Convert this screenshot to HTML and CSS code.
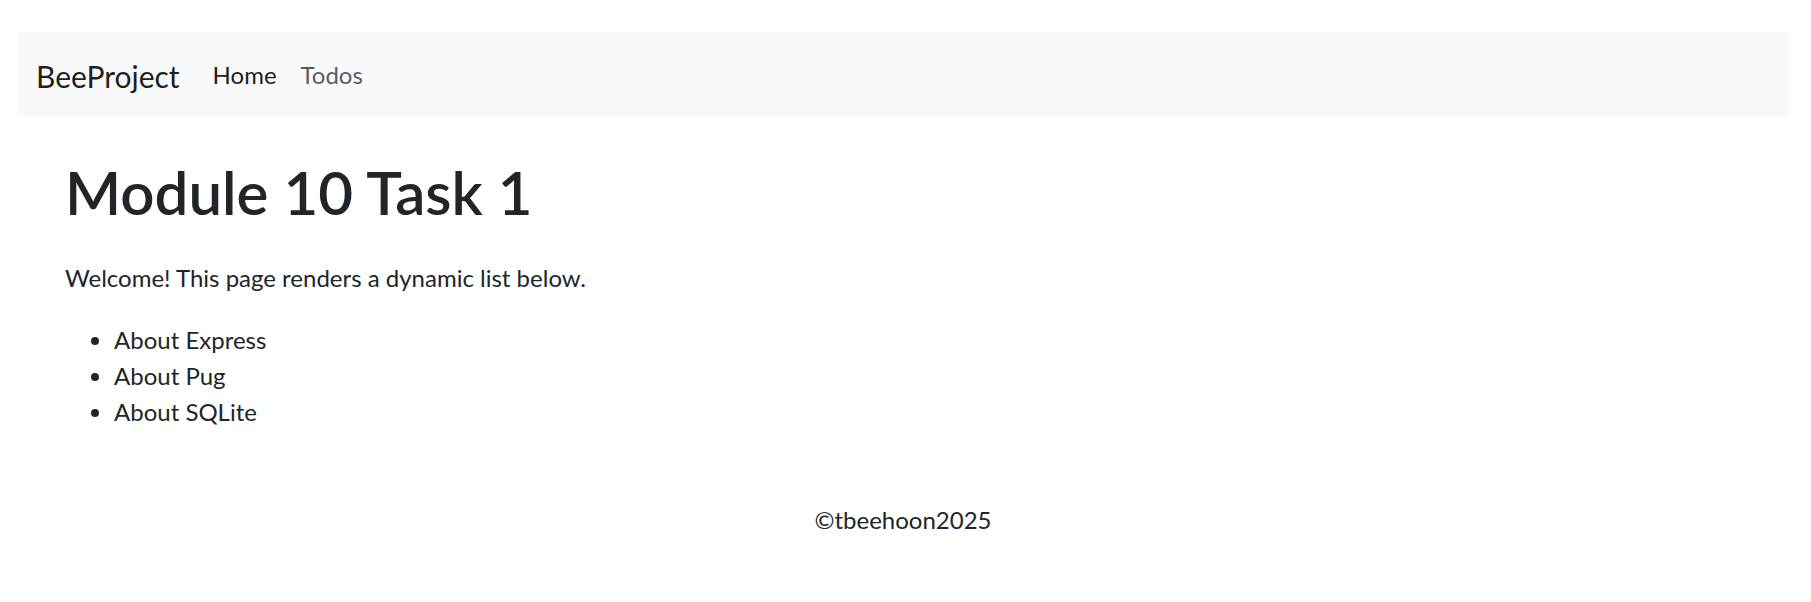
FILE: index.html
```html
<!DOCTYPE html>
<html lang="en">
<head>
<meta charset="utf-8">
<title>BeeProject</title>
<link rel="stylesheet" href="styles.css">
</head>
<body>
<nav class="navbar">
  <a class="brand" href="#">BeeProject</a>
  <ul class="nav">
    <li><a class="nav-link active" href="#">Home</a></li>
    <li><a class="nav-link" href="#">Todos</a></li>
  </ul>
</nav>
<main class="container">
  <h1 class="title">Module 10 Task 1</h1>
  <p class="lead">Welcome! This page renders a dynamic list below.</p>
  <ul class="items">
    <li>About Express</li>
    <li>About Pug</li>
    <li>About SQLite</li>
  </ul>
</main>
<footer class="footer">©tbeehoon2025</footer>
</body>
</html>
```
FILE: styles.css
```css
* { box-sizing: border-box; }
body {
  margin: 0;
  padding: 32px 23px 0 18px;
  font-family: Lato, "Open Sans", sans-serif;
  font-size: 24px;
  line-height: 1.5;
  color: #212529;
  background: #fff;
}
a { text-decoration: none; }
.navbar {
  display: flex;
  align-items: center;
  height: 84px;
  padding: 0 18px;
  background: #f8f9fa;
}
.brand {
  font-size: 30px;
  color: rgba(0,0,0,0.9);
  margin-right: 21px;
  padding-top: 4px;
}
.nav {
  display: flex;
  list-style: none;
  margin: 0;
  padding: 0;
  padding-top: 2px;
}
.nav-link {
  display: block;
  padding: 0 12px;
  color: rgba(33,37,41,0.75);
}
.nav-link.active { color: rgba(0,0,0,0.9); }
.container {
  padding: 0 0 0 47px;
}
.title {
  font-size: 60px;
  font-weight: 600;
  line-height: 1.2;
  margin: 40px 0 32px;
}
.lead {
  margin: 0 0 26px;
}
.items {
  margin: 0;
  padding-left: 49px;
}
.footer {
  text-align: center;
  margin-top: 72px;
}
```
